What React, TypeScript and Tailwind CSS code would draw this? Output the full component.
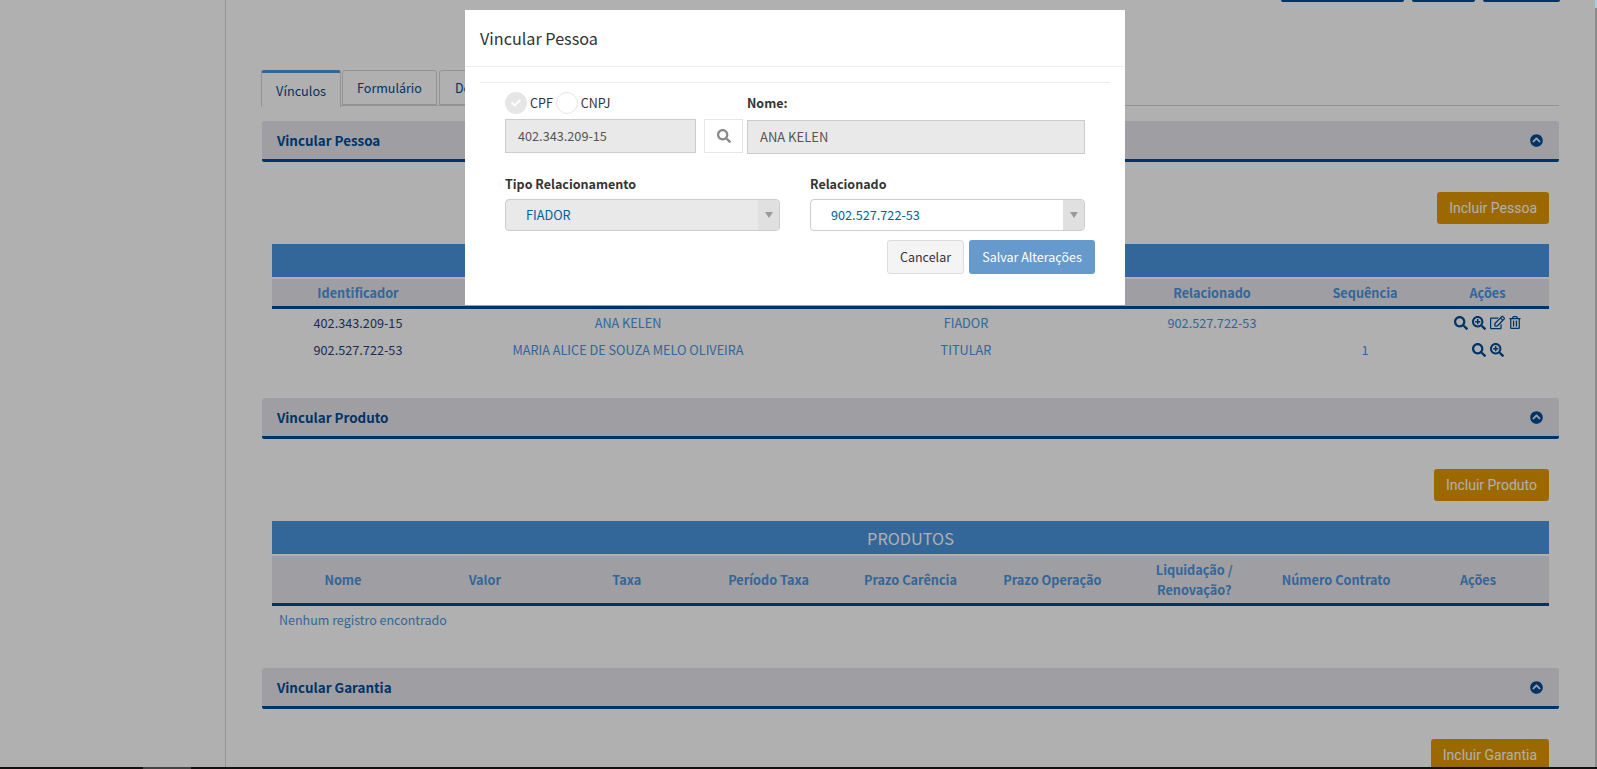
import React from 'react'
import { FaCheck, FaChevronCircleUp, FaRegEdit, FaRegTrashAlt, FaSearch, FaSearchPlus } from 'react-icons/fa'

const font = 'font-["Noto_Sans_CJK_SC","Noto_Sans",sans-serif]'

const pessoaRows = [
  { id: '402.343.209-15', nome: 'ANA KELEN', tipo: 'FIADOR', rel: '902.527.722-53', seq: '', full: true },
  { id: '902.527.722-53', nome: 'MARIA ALICE DE SOUZA MELO OLIVEIRA', tipo: 'TITULAR', rel: '', seq: '1', full: false },
]

const produtoCols = ['Nome', 'Valor', 'Taxa', 'Período Taxa', 'Prazo Carência', 'Prazo Operação', 'Liquidação / Renovação?', 'Número Contrato', 'Ações']

function PanelHeader({ title }: { title: string }) {
  return (
    <div className="flex h-[41px] items-center justify-between rounded-t-[3px] rounded-b-[2px] border-b-[3px] border-[#004a94] bg-[#e6e5ec] pl-[15px] pr-[16px]">
      <h3 className="text-[13.4px] font-bold leading-[20px] text-[#004a94]">{title}</h3>
      <FaChevronCircleUp className="h-[13px] w-[13px] text-[#004a94]" />
    </div>
  )
}

function ActionIcons({ full }: { full: boolean }) {
  return (
    <div className="flex items-center justify-center gap-[4px] text-[#004a94]">
      <FaSearch className="h-[14px] w-[14px]" />
      <FaSearchPlus className="h-[14px] w-[14px]" />
      {full && <FaRegEdit className="h-[15px] w-[15px]" />}
      {full && <FaRegTrashAlt className="h-[13px] w-[12px]" />}
    </div>
  )
}

function OrangeButton({ label }: { label: string }) {
  return (
    <button className="h-[32px] rounded-[3px] bg-[#e29700] px-[12px] font-['Roboto',sans-serif] text-[14px] text-white">{label}</button>
  )
}

function SelectBox({ value, disabled }: { value: string; disabled?: boolean }) {
  return (
    <div className={`flex h-[32px] items-stretch overflow-hidden rounded-[4px] border border-[#cccccc] ${disabled ? 'bg-[#e9e9e9]' : 'bg-white'}`}>
      <span className="flex flex-1 items-center pl-[20px] text-[12.7px] leading-[20px] text-[#00629e]">{value}</span>
      <span className="flex w-[21px] items-center justify-center bg-[#e0e0e0]">
        <span className="h-0 w-0 border-x-[4px] border-t-[6px] border-x-transparent border-t-[#999999]" />
      </span>
    </div>
  )
}

export default function App() {
  return (
    <div className={`relative flex h-[769px] overflow-hidden bg-white ${font}`}>
      {/* menu lateral */}
      <aside className="w-[226px] shrink-0 border-r border-[#d6d6d6] bg-white" />

      {/* conteudo */}
      <main className="min-w-0 flex-1 pl-[36px] pr-[38px]">
        <div className="-mr-px flex h-[2px] justify-end gap-[8px]">
          <div className="w-[123px] rounded-b-[2px] bg-[#004a94]" />
          <div className="w-[63px] rounded-b-[2px] bg-[#004a94]" />
          <div className="w-[77px] rounded-b-[2px] bg-[#004a94]" />
        </div>

        {/* abas */}
        <div className="-ml-px mt-[68px] flex h-[36px] gap-[1px] border-b border-[#d6d6d6]">
          <div className="flex h-[37px] w-[80px] items-center justify-center rounded-t-[3px] border-x border-t-[3px] border-[#d6d6d6] border-t-[#4a94de] bg-white pt-[1px] text-[12.7px] leading-[20px] text-[#004a94]">Vínculos</div>
          <div className="flex h-[35px] w-[95px] items-center justify-center rounded-t-[3px] border border-[#d6d6d6] text-[12.5px] leading-[20px] text-[#004a94]">Formulário</div>
          <div className="ml-[1px] flex h-[35px] w-[110px] items-center rounded-t-[3px] border border-[#d6d6d6] pl-[15px] text-[12.5px] leading-[20px] text-[#004a94]">Documentos</div>
        </div>

        <div className="mt-[15px]">
          <PanelHeader title="Vincular Pessoa" />
          <div className="px-[10px]">
            <div className="mt-[30px] flex justify-end">
              <OrangeButton label="Incluir Pessoa" />
            </div>
            <div className="mt-[20px] h-[33px] bg-[#4a94de]" />
            <table className="mt-[2px] w-full table-fixed border-separate border-spacing-0 text-center">
              <colgroup>
                <col className="w-[172px]" />
                <col className="w-[368px]" />
                <col className="w-[308px]" />
                <col className="w-[184px]" />
                <col className="w-[122px]" />
                <col />
              </colgroup>
              <thead>
                <tr className="text-[12.7px] font-bold leading-[20px] text-[#4a94de]">
                  {['Identificador', 'Nome', 'Tipo', 'Relacionado', 'Sequência', 'Ações'].map((col) => (
                    <th key={col} className="h-[30px] border-b-[3px] border-[#004a94] bg-[#e6e5ec] p-0">{col}</th>
                  ))}
                </tr>
              </thead>
              <tbody className="text-[12.7px] leading-[20px] text-[#4a94de]">
                {pessoaRows.map((row) => (
                  <tr key={row.id} className="h-[27px]">
                    <td className="text-[#2d4279]">{row.id}</td>
                    <td>{row.nome}</td>
                    <td>{row.tipo}</td>
                    <td>{row.rel}</td>
                    <td>{row.seq}</td>
                    <td><ActionIcons full={row.full} /></td>
                  </tr>
                ))}
              </tbody>
            </table>
          </div>
        </div>

        <div className="mt-[35px]">
          <PanelHeader title="Vincular Produto" />
          <div className="px-[10px]">
            <div className="mt-[30px] flex justify-end">
              <OrangeButton label="Incluir Produto" />
            </div>
            <div className="mt-[20px] flex h-[33px] items-center justify-center bg-[#4a94de] text-[16.3px] leading-[20px] text-white">PRODUTOS</div>
            <table className="mt-[2px] w-full table-fixed border-separate border-spacing-0 text-center">
              <thead>
                <tr className="text-[12.7px] font-bold leading-[20px] text-[#4a94de]">
                  {produtoCols.map((col) => (
                    <th key={col} className="h-[50px] border-b-[3px] border-[#004a94] bg-[#e6e5ec] px-[16px] py-0">{col}</th>
                  ))}
                </tr>
              </thead>
            </table>
            <p className="mt-[4px] pl-[7px] text-[12.5px] leading-[20px] text-[#4a94de]">Nenhum registro encontrado</p>
          </div>
        </div>

        <div className="mt-[38px]">
          <PanelHeader title="Vincular Garantia" />
          <div className="mt-[30px] flex justify-end px-[10px]">
            <OrangeButton label="Incluir Garantia" />
          </div>
        </div>
      </main>

      {/* fundo escuro do modal */}
      <div className="absolute inset-0 bg-black/[0.31]" />
      <div className="absolute right-0 top-0 h-[8px] w-[2px] bg-[#a8cde6]" />
      <div className="absolute right-0 top-[8px] bottom-0 w-[2px] bg-[#8c8c8c]" />
      <div className="absolute inset-x-0 bottom-0 flex h-[2px] bg-[#111111]">
        <div className="ml-[143px] w-[48px] bg-[#444444]" />
      </div>

      {/* modal */}
      <div className="absolute left-[465px] top-[10px] h-[295px] w-[660px] bg-white">
        <div className="flex h-[57px] items-center border-b border-[#eeeeee] px-[15px]">
          <h4 className="text-[16.2px] leading-[20px] text-[#333333]">Vincular Pessoa</h4>
        </div>
        <div className="px-[15px] pt-[15px]">
          <div className="border-t border-[#eeeeee] px-[25px] pt-[9px]">
            <div className="flex">
              <div className="w-[242px]">
                <div className="flex h-[22px] items-center text-[12.5px] leading-[20px] text-[#333333]">
                  <span className="flex h-[22px] w-[22px] items-center justify-center rounded-full bg-[#e6e6e6]">
                    <FaCheck className="h-[10px] w-[10px] text-white" />
                  </span>
                  <span className="ml-[3px]">CPF</span>
                  <span className="ml-[3px] h-[22px] w-[22px] rounded-full border border-[#e6e6e6] bg-white" />
                  <span className="ml-[3px]">CNPJ</span>
                </div>
                <div className="mt-[5px] flex gap-[8px]">
                  <div className="flex h-[34px] w-[191px] items-center border border-[#cccccc] bg-[#e9e9e9] pl-[12px] text-[12.7px] leading-[20px] text-[#555555]">402.343.209-15</div>
                  <div className="flex h-[34px] w-[39px] items-center justify-center border border-[#e6e6e6] bg-white text-[#888888]">
                    <FaSearch className="h-[14px] w-[14px]" />
                  </div>
                </div>
              </div>
              <div className="flex-1">
                <label className="flex h-[22px] items-center text-[12.5px] font-bold leading-[20px] text-[#333333]">Nome:</label>
                <div className="mt-[6px] flex h-[34px] items-center border border-[#cccccc] bg-[#e9e9e9] pl-[12px] text-[13px] leading-[20px] text-[#555555]">ANA KELEN</div>
              </div>
            </div>
            <div className="mt-[20px] grid grid-cols-[275px_275px] gap-x-[30px]">
              <div>
                <label className="block h-[25px] text-[12.5px] font-bold leading-[20px] text-[#333333]">Tipo Relacionamento</label>
                <SelectBox value="FIADOR" disabled />
              </div>
              <div>
                <label className="block h-[25px] text-[12.5px] font-bold leading-[20px] text-[#333333]">Relacionado</label>
                <SelectBox value="902.527.722-53" />
              </div>
            </div>
          </div>
          <div className="mt-[9px] flex justify-end gap-[5px] pr-[15px]">
            <button className="h-[34px] w-[77px] rounded-[3px] border border-[#dddddd] bg-[#f4f4f4] text-[12.5px] leading-[20px] text-[#333333]">Cancelar</button>
            <button className="h-[34px] w-[126px] rounded-[3px] bg-[#6699cc] text-[12.5px] leading-[20px] text-white">Salvar Alterações</button>
          </div>
        </div>
      </div>
    </div>
  )
}
